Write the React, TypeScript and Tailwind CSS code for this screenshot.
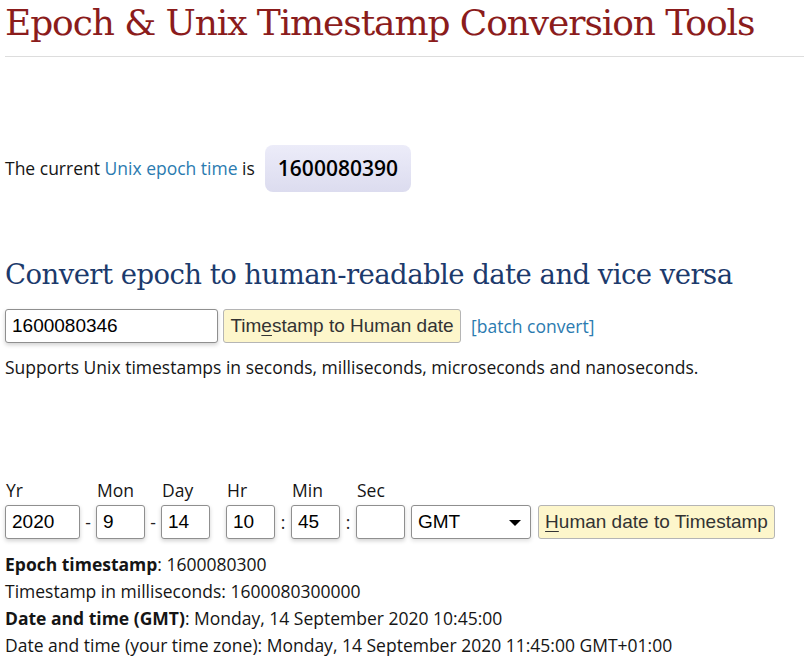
import React from "react";

function Field({ label, value, w }: { label: string; value: string; w: string }) {
  return (
    <div className="flex flex-col">
      <div className="h-[24px] leading-[19px] pl-[1px]">{label}</div>
      <div
        className={`${w} h-[34px] border border-[#8f8f8f] rounded-[3px] bg-white shadow-[0_2px_4px_rgba(0,0,0,0.18)] flex items-center pl-[6px] text-[19px] font-['Liberation_Sans',sans-serif] text-black`}
      >
        {value}
      </div>
    </div>
  );
}

function Sep({ ch }: { ch: string }) {
  return (
    <div className="flex flex-col">
      <div className="h-[24px]" />
      <div className="h-[34px] flex items-center justify-center w-[16px] text-[#222]">{ch}</div>
    </div>
  );
}

export default function App() {
  return (
    <div className="w-[804px] h-[660px] overflow-hidden bg-white pl-[5px] text-[#151515] font-['Open_Sans',sans-serif] text-[17.5px]">
      <h1 className="h-[57px] border-b border-[#dddddd] text-[36px] leading-[46px] text-[#8b1c1c] font-['DejaVu_Serif',serif] tracking-[-1.1px] whitespace-nowrap">
        Epoch &amp; Unix Timestamp Conversion Tools
      </h1>

      <div className="mt-[88px] flex items-center h-[47px]">
        <span>
          The current <span className="text-[#2b7bb0]">Unix epoch time</span> is
        </span>
        <div className="ml-[10px] h-[47px] px-[13px] rounded-[8px] bg-gradient-to-b from-[#ececf9] to-[#dcdcef] flex items-center text-[21px] font-semibold text-black">
          1600080390
        </div>
      </div>

      <h2 className="mt-[64px] text-[27.5px] leading-[36px] text-[#1c3a6c] font-['DejaVu_Serif',serif] tracking-[-0.55px] whitespace-nowrap">
        Convert epoch to human-readable date and vice versa
      </h2>

      <div className="mt-[17px] flex items-center h-[34px]">
        <div className="w-[213px] h-[34px] border border-[#8f8f8f] rounded-[3px] bg-white shadow-[0_2px_4px_rgba(0,0,0,0.18)] flex items-center pl-[6px] text-[19px] font-['Liberation_Sans',sans-serif] text-black">
          1600080346
        </div>
        <div className="ml-[5px] w-[238px] h-[34px] border border-[#b5b5b5] rounded-[3px] bg-[#fdf6cb] flex items-center justify-center text-[19px] font-['Liberation_Sans',sans-serif] text-[#333]">
          Tim<span className="underline underline-offset-[3px]">e</span>stamp to Human date
        </div>
        <span className="ml-[10px] text-[#2b7bb0]">[batch convert]</span>
      </div>

      <div className="mt-[12px] leading-[24px]">
        Supports Unix timestamps in seconds, milliseconds, microseconds and nanoseconds.
      </div>

      <div className="mt-[102px] flex items-end">
        <Field label="Yr" value="2020" w="w-[75px]" />
        <Sep ch="-" />
        <Field label="Mon" value="9" w="w-[49px]" />
        <Sep ch="-" />
        <Field label="Day" value="14" w="w-[49px]" />
        <div className="w-[16px]" />
        <Field label="Hr" value="10" w="w-[49px]" />
        <Sep ch=":" />
        <Field label="Min" value="45" w="w-[49px]" />
        <Sep ch=":" />
        <Field label="Sec" value="" w="w-[49px]" />
        <div className="ml-[6px] w-[120px] h-[34px] border border-[#8f8f8f] rounded-[3px] bg-white shadow-[0_2px_4px_rgba(0,0,0,0.12)] flex items-center justify-between pl-[6px] pr-[9px] text-[19px] font-['Liberation_Sans',sans-serif] text-black">
          <span>GMT</span>
          <span className="w-0 h-0 border-l-[6px] border-r-[6px] border-t-[6px] border-l-transparent border-r-transparent border-t-black mt-[2px]" />
        </div>
        <div className="ml-[7px] w-[237px] h-[34px] border border-[#b5b5b5] rounded-[3px] bg-[#fdf6cb] flex items-center justify-center text-[19px] font-['Liberation_Sans',sans-serif] text-[#333]">
          <span className="underline underline-offset-[3px]">H</span>uman date to Timestamp
        </div>
      </div>

      <div className="mt-[12px] leading-[27px]">
        <div>
          <b>Epoch timestamp</b>: 1600080300
        </div>
        <div>Timestamp in milliseconds: 1600080300000</div>
        <div>
          <b>Date and time (GMT)</b>: Monday, 14 September 2020 10:45:00
        </div>
        <div>Date and time (your time zone): Monday, 14 September 2020 11:45:00 GMT+01:00</div>
      </div>
    </div>
  );
}
